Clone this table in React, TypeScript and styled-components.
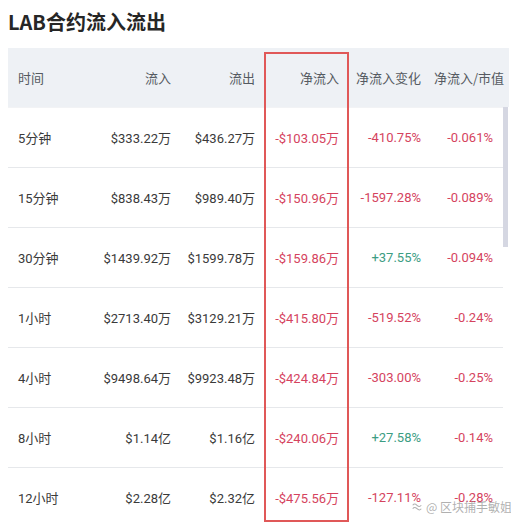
import React from "react";
import styled, { createGlobalStyle } from "styled-components";

const GlobalStyle = createGlobalStyle`
  body {
    margin: 8px;
    background: #ffffff;
    font-family: Roboto, "Noto Sans CJK SC", sans-serif;
    overflow: hidden;
  }
`;

const COLS = "89px 84px 84px 84px 82px 72px";

const Wrapper = styled.div`
  position: relative;
  width: 501px;
`;

const Title = styled.h1`
  margin: 0 0 12px 0;
  font-size: 20px;
  line-height: 28px;
  font-weight: 700;
  color: #262626;
  font-family: "Noto Sans CJK SC", sans-serif;
`;

const HeaderRow = styled.div`
  display: grid;
  grid-template-columns: 89px 84px 84px 84px 82px 78px;
  height: 59px;
  background: #eef1f5;
  align-items: center;
`;

const BodyArea = styled.div`
  display: flex;
`;

const Rows = styled.div`
  width: 495px;
`;

const Row = styled.div`
  display: grid;
  grid-template-columns: ${COLS};
  height: 59px;
  border-top: 1px solid #e6e8eb;
  align-items: center;
  &:first-child {
    border-top: 1px solid #f2f3f5;
  }
`;

const Cell = styled.div<{ $left?: boolean; $tone?: "up" | "down"; $head?: boolean; $tight?: boolean }>`
  font-size: 13px;
  white-space: nowrap;
  text-align: ${(p) => (p.$left ? "left" : "right")};
  padding: ${(p) => (p.$left ? "0 0 0 10px" : p.$tight ? "0 5px 0 0" : "0 10px 0 0")};
  color: ${(p) =>
    p.$head ? "#555a61" : p.$tone === "down" ? "#d5435e" : p.$tone === "up" ? "#3c9d83" : "#3a3a3a"};
  font-family: ${(p) => (p.$head ? '"Noto Sans CJK SC", sans-serif' : 'Roboto, "Noto Sans CJK SC", sans-serif')};
`;

const ScrollTrack = styled.div`
  width: 6px;
  background: #ffffff;
`;

const ScrollThumb = styled.div`
  width: 5px;
  height: 140px;
  background: #d5d7e2;
`;

const Highlight = styled.div`
  position: absolute;
  left: 256px;
  top: 44px;
  width: 81px;
  height: 466px;
  border: 2px solid #e05858;
  pointer-events: none;
`;

const Watermark = styled.div`
  position: absolute;
  left: 403px;
  top: 490px;
  display: flex;
  align-items: center;
  gap: 3px;
  font-size: 12px;
  color: rgba(150, 150, 150, 0.75);
  font-family: "Noto Sans CJK SC", sans-serif;
  white-space: nowrap;
`;

type Tone = "up" | "down";

const rows: { time: string; inflow: string; outflow: string; net: string; change: [string, Tone]; ratio: string }[] = [
  { time: "5分钟", inflow: "$333.22万", outflow: "$436.27万", net: "-$103.05万", change: ["-410.75%", "down"], ratio: "-0.061%" },
  { time: "15分钟", inflow: "$838.43万", outflow: "$989.40万", net: "-$150.96万", change: ["-1597.28%", "down"], ratio: "-0.089%" },
  { time: "30分钟", inflow: "$1439.92万", outflow: "$1599.78万", net: "-$159.86万", change: ["+37.55%", "up"], ratio: "-0.094%" },
  { time: "1小时", inflow: "$2713.40万", outflow: "$3129.21万", net: "-$415.80万", change: ["-519.52%", "down"], ratio: "-0.24%" },
  { time: "4小时", inflow: "$9498.64万", outflow: "$9923.48万", net: "-$424.84万", change: ["-303.00%", "down"], ratio: "-0.25%" },
  { time: "8小时", inflow: "$1.14亿", outflow: "$1.16亿", net: "-$240.06万", change: ["+27.58%", "up"], ratio: "-0.14%" },
  { time: "12小时", inflow: "$2.28亿", outflow: "$2.32亿", net: "-$475.56万", change: ["-127.11%", "down"], ratio: "-0.28%" },
];

const WatermarkIcon = () => (
  <svg width="12" height="12" viewBox="0 0 14 14" fill="none" stroke="currentColor" strokeWidth="1.2">
    <path d="M2 5c1.5-2 3-2 5 0s3.5 2 5 0" />
    <path d="M2 9c1.5-2 3-2 5 0s3.5 2 5 0" />
  </svg>
);

export default function App() {
  return (
    <>
      <GlobalStyle />
      <Wrapper>
        <Title>LAB合约流入流出</Title>
        <HeaderRow>
          <Cell $head $left>时间</Cell>
          <Cell $head>流入</Cell>
          <Cell $head>流出</Cell>
          <Cell $head>净流入</Cell>
          <Cell $head>净流入变化</Cell>
          <Cell $head $tight>净流入/市值</Cell>
        </HeaderRow>
        <BodyArea>
          <Rows>
            {rows.map((r) => (
              <Row key={r.time}>
                <Cell $left>{r.time}</Cell>
                <Cell>{r.inflow}</Cell>
                <Cell>{r.outflow}</Cell>
                <Cell $tone="down">{r.net}</Cell>
                <Cell $tone={r.change[1]}>{r.change[0]}</Cell>
                <Cell $tone="down">{r.ratio}</Cell>
              </Row>
            ))}
          </Rows>
          <ScrollTrack>
            <ScrollThumb />
          </ScrollTrack>
        </BodyArea>
        <Highlight />
        <Watermark>
          <WatermarkIcon />
          <span>@ 区块捕手敏姐</span>
        </Watermark>
      </Wrapper>
    </>
  );
}
